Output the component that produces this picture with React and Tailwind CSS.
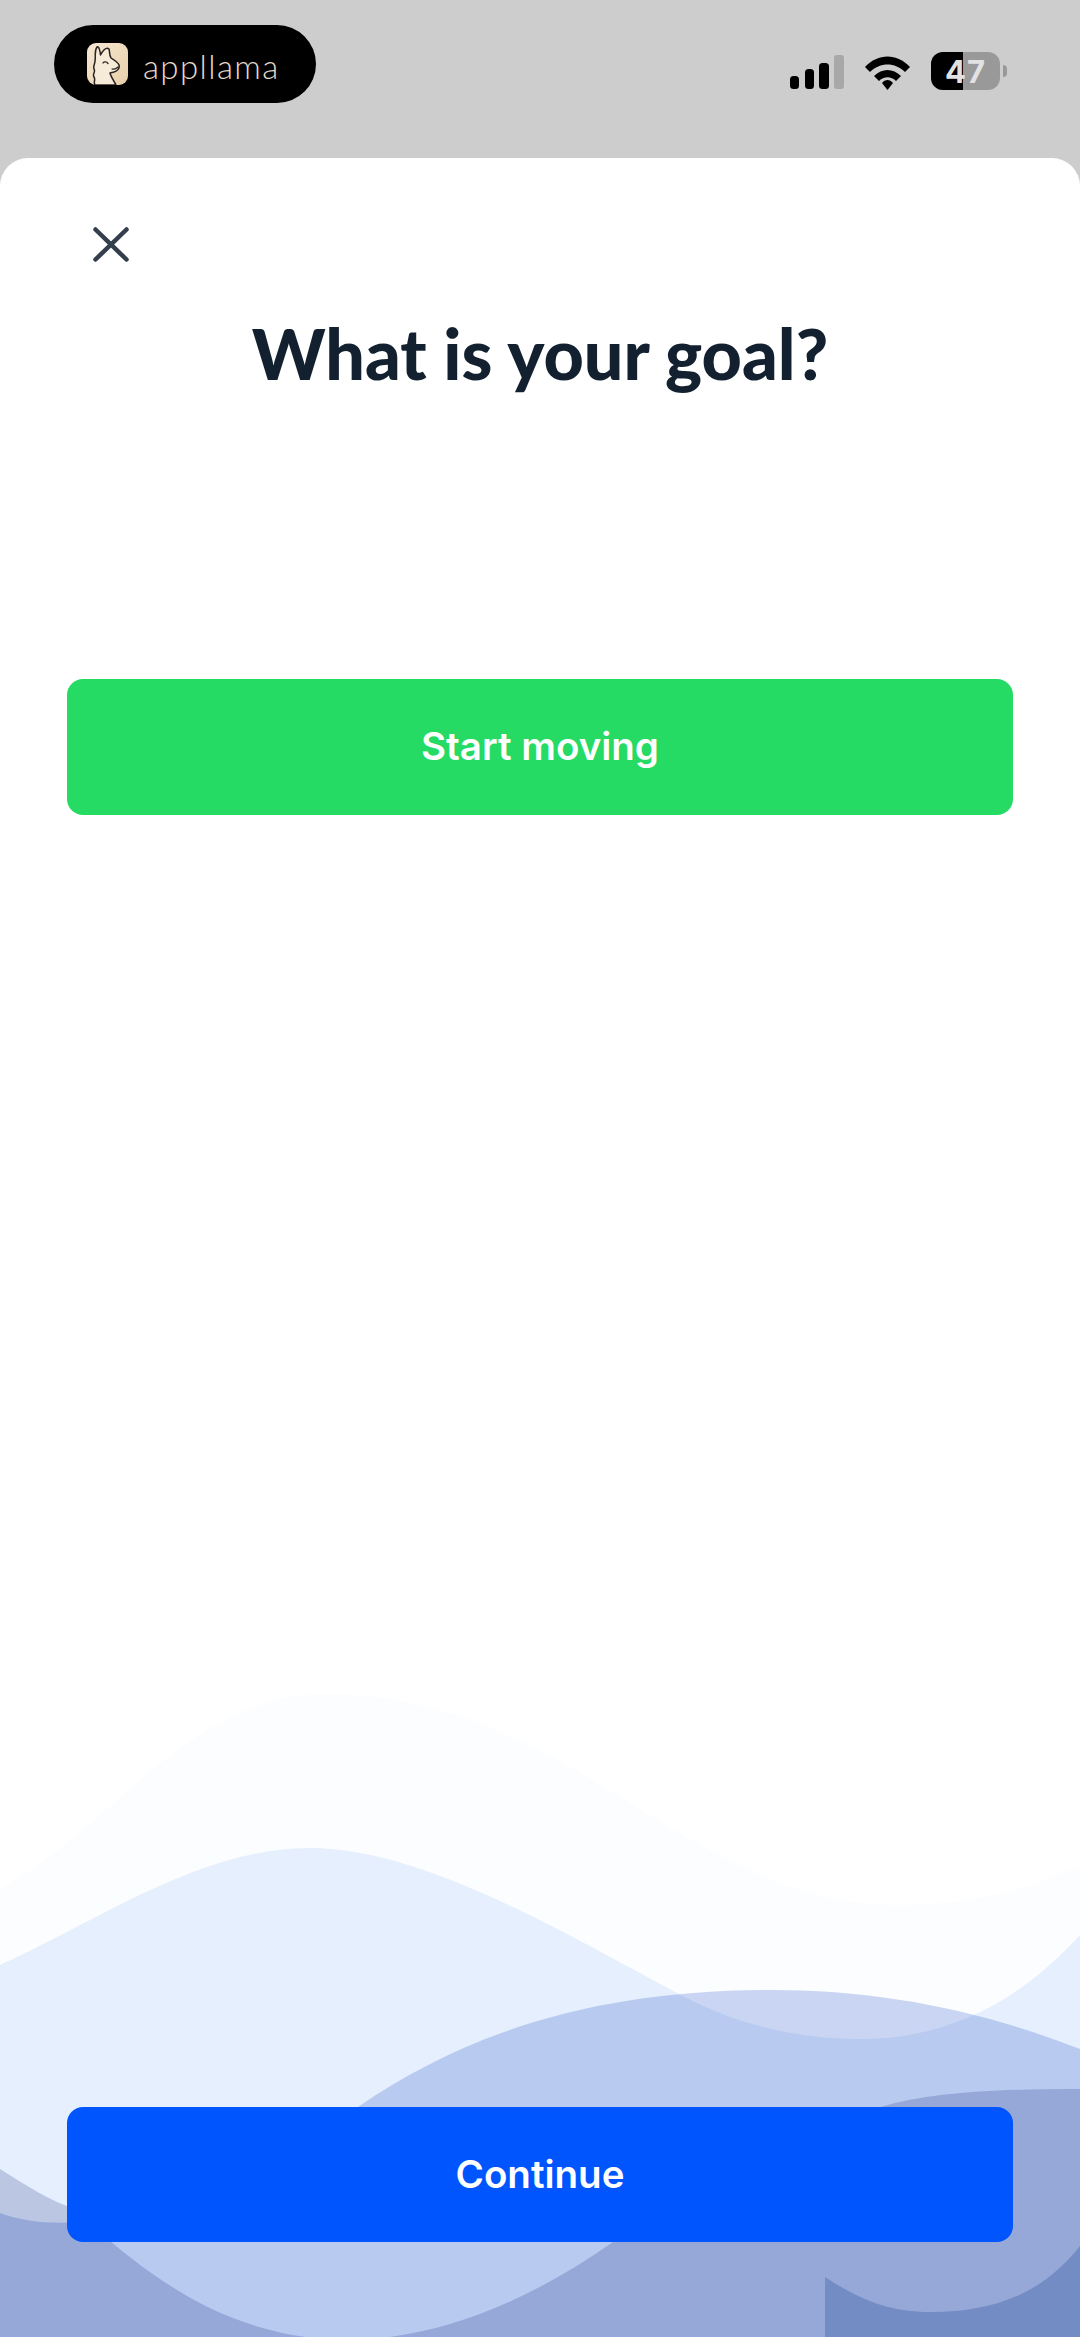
export default function App() {
  return (
    <div className="flex h-[2337px] w-[1080px] flex-col overflow-hidden bg-[#cdcdcd]">
      {/* Status bar */}
      <header className="flex h-[158px] shrink-0 items-start justify-between pl-[54px] pr-[73px]">
        <div className="mt-[25px] flex h-[78px] w-[262px] items-center rounded-full bg-black pl-[33px]">
          <LlamaIcon />
          <span className="ml-[15px] mt-[4px] font-['Lato',sans-serif] text-[33px] font-light leading-none tracking-[1.4px] text-[#e4d9ca]">
            appllama
          </span>
        </div>
        <div className="mt-[52px] flex items-center">
          <svg width="54" height="34" viewBox="0 0 54 34" className="mt-[2px]">
            <rect x="0" y="21" width="9" height="13" rx="3.5" fill="#000" />
            <rect x="15" y="14" width="9" height="20" rx="3.5" fill="#000" />
            <rect x="29" y="8" width="10" height="26" rx="3.5" fill="#000" />
            <rect x="44" y="0" width="10" height="34" rx="3" fill="#a8a8a8" />
          </svg>
          <svg width="47" height="35" viewBox="0 0 47 35" className="ml-[20px] mt-[2px]">
            <path d="M1 12 C14 -2 33 -2 46 12 L41 17 C31 7 16 7 6 17 Z" fill="#000" />
            <path d="M10 21 C18 13 29 13 37 21 L32 26 C27 21 20 21 15 26 Z" fill="#000" />
            <path d="M18 28 C21 24 26 24 29 28 L23.500 35 Z" fill="#000" />
          </svg>
          <div className="relative ml-[20px] flex h-[38px] w-[69px] overflow-hidden rounded-[12px] bg-[#999]">
            <div className="h-full w-[32px] bg-black" />
            <span className="absolute inset-0 flex items-center justify-center font-['Inter',sans-serif] text-[31px] font-bold leading-none tracking-[1px] text-[#e2e2e2]">
              47
            </span>
          </div>
          <div className="ml-[3px] h-[12px] w-[4px] rounded-r-full bg-[#999]" />
        </div>
      </header>

      {/* Sheet */}
      <main className="relative flex flex-1 flex-col overflow-hidden rounded-t-[28px] bg-white">
        <Waves />

        <button className="relative ml-[93px] mt-[69px] h-[35px] w-[36px] self-start text-[#333f4d]">
          <svg width="36" height="35" viewBox="0 0 36 35" fill="none" stroke="currentColor" strokeWidth="4.500" strokeLinecap="round">
            <path d="M2.500 2.500 L33.500 32.500" />
            <path d="M33.500 2.500 L2.500 32.500" />
          </svg>
        </button>

        <h1 className="relative mt-[49px] text-center font-['Lato',sans-serif] text-[70px] font-black leading-[84px] text-[#12202f]">
          What is your goal?
        </h1>

        <div className="relative mx-[67px] mt-[284px] flex h-[136px] items-center justify-center rounded-[16px] bg-[#25db64] font-['Inter',sans-serif] text-[38.5px] font-semibold text-white">
          Start moving
        </div>

        <div className="relative mx-[67px] mt-auto mb-[95px] flex h-[135px] items-center justify-center rounded-[16px] bg-[#0055ff] font-['Inter',sans-serif] text-[38.5px] font-semibold text-white">
          Continue
        </div>
      </main>
    </div>
  );
}

function Waves() {
  return (
    <svg className="absolute bottom-0 left-0" width="1080" height="697" viewBox="0 1640 1080 697">
      <path d="M0 1889 C110 1830 190 1694 325 1694 C490 1694 600 1790 700 1845 C770 1885 830 1905 900 1905 C970 1905 1030 1890 1080 1865 V2337 H0 Z" fill="#fbfdff" />
      <path d="M0 1965 C100 1920 200 1848 310 1848 C420 1848 560 1930 675 1992 C730 2022 790 2039 861 2039 C960 2039 1030 1990 1080 1935 V2337 H0 Z" fill="#e5effd" />
      <path d="M0 2213 C25 2222 50 2224 80 2222 C180 2215 270 2175 358 2107 C470 2030 600 1990 771 1990 C880 1990 980 2010 1080 2049 V2337 H0 Z" fill="#2152c8" fillOpacity="0.23" />
      <path d="M0 2169 C30 2188 50 2200 67 2206 C120 2245 200 2337 344 2340 C440 2340 530 2300 613 2242 C700 2180 790 2130 881 2107 C930 2092 1000 2089 1080 2089 V2337 H0 Z" fill="#0e2276" fillOpacity="0.2" />
      <path d="M825 2277 C860 2300 890 2312 930 2312 C1000 2312 1045 2290 1080 2246 V2337 H825 Z" fill="#748cc4" />
    </svg>
  );
}

function LlamaIcon() {
  return (
    <svg width="41" height="42" viewBox="0 0 41 42" className="shrink-0">
      <defs>
        <linearGradient id="llamaBg" x1="0" y1="0" x2="1" y2="1">
          <stop offset="0" stopColor="#f6e8d4" />
          <stop offset="1" stopColor="#e8cfa9" />
        </linearGradient>
      </defs>
      <rect width="41" height="42" rx="9" fill="url(#llamaBg)" />
      <path
        d="M8 42 C6 39 9 37 7 34 C5 31 9 29 7 26 C6 23 8 21 8 18 C9 13 7 8 10 4 C12 3 13 8 13.500 12 C15 9 19 3 22 6 C23 9 22 12 24 15 C27 17 31 19 32 22 C33 26 30 28 27 29 L23 30 C24 34 27 38 29 42 Z"
        fill="#f6ead8"
        stroke="#2a2420"
        strokeWidth="1.500"
        strokeLinejoin="round"
      />
      <path d="M16 20 C17 18.500 19.500 18.500 21 20.500" fill="none" stroke="#2a2420" strokeWidth="1.300" strokeLinecap="round" />
      <path d="M25 26 C27 26.500 29 26 31 24" fill="none" stroke="#2a2420" strokeWidth="1.200" strokeLinecap="round" />
    </svg>
  );
}
